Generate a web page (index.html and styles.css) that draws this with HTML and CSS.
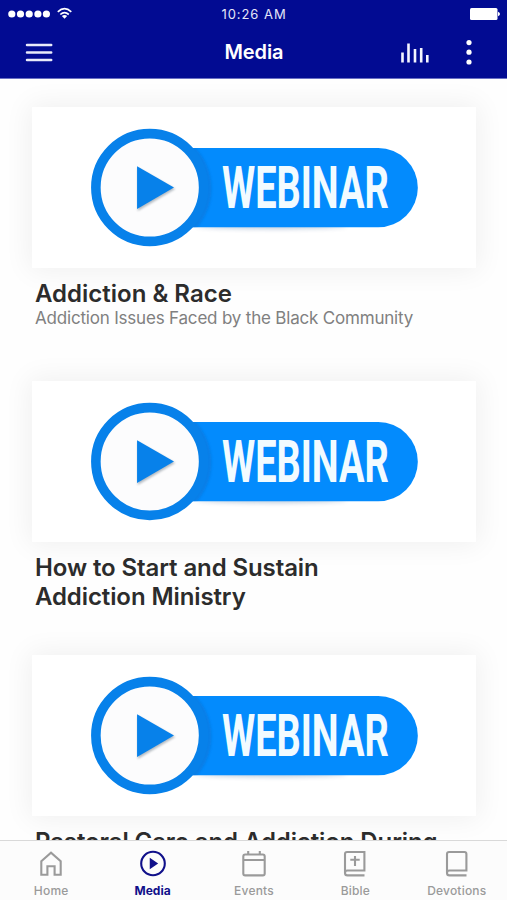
FILE: index.html
```html
<!DOCTYPE html>
<html lang="en">
<head>
<meta charset="utf-8">
<title>Media</title>
<link rel="stylesheet" href="styles.css">
</head>
<body>
<svg class="defs" width="0" height="0" aria-hidden="true">
  <defs>
    <filter id="soft" x="-20%" y="-20%" width="140%" height="140%"><feGaussianBlur stdDeviation="1.2"/></filter>
    <filter id="softer" x="-20%" y="-200%" width="140%" height="500%"><feGaussianBlur stdDeviation="2.5"/></filter>
    <clipPath id="pill"><path d="M118 41H347A39.7 39.7 0 0 1 347 120.400H118Z"/></clipPath>
  </defs>
</svg>
<header class="header">
  <div class="status">
    <svg class="signal" width="66" height="14" viewBox="0 0 66 14" fill="#fff">
      <circle cx="3.800" cy="7" r="3.600"/><circle cx="12.500" cy="7" r="3.600"/><circle cx="21.200" cy="7" r="3.600"/><circle cx="29.900" cy="7" r="3.600"/><circle cx="38.400" cy="7" r="3.600"/>
      <g fill="none" stroke="#fff" stroke-width="1.700"><path d="M49.800 4.800Q56.500-1.400 63.300 4.800M52.300 7.500Q56.500 3.600 60.800 7.500"/></g>
      <path d="M53.900 9Q56.500 6.900 59.200 9L56.500 11.800Z"/>
    </svg>
    <span class="time">10:26 AM</span>
    <svg class="battery" width="30" height="12" viewBox="0 0 30 12" fill="#fff"><rect width="27.500" height="12" rx="1.500"/><path d="M28 3.800Q30 4.500 30 6T28 8.200Z"/></svg>
  </div>
  <div class="nav">
    <svg class="menu" width="28" height="20" viewBox="0 0 28 20"><path d="M2 2.100H26.200M2 9.500H26.200M2 17H26.200" stroke="#e9eafa" stroke-width="2.500" stroke-linecap="round"/></svg>
    <h1>Media</h1>
    <div class="actions">
      <svg width="28" height="22" viewBox="0 0 28 22"><path d="M1.500 10.500V20.500M7.500 1.500V20.500M14 7V20.500M20.200 6V20.500M26.300 13V20.500" stroke="#f4f5ff" stroke-width="2.600"/></svg>
      <svg width="6" height="26" viewBox="0 0 6 26" fill="#fff"><circle cx="3" cy="2.600" r="2.600"/><circle cx="3" cy="12.200" r="2.600"/><circle cx="3" cy="22" r="2.600"/></svg>
    </div>
  </div>
</header>
<main class="list">
  <article class="item">
    <svg class="thumb" viewBox="0 0 445 161">
      <g id="banner">
        <ellipse cx="240" cy="119" rx="75" ry="2.500" fill="#003a7a" opacity=".3" filter="url(#softer)"/>
        <path d="M118 41H347A39.700 39.700 0 0 1 347 120.400H118Z" fill="#038bfd"/>
        <g clip-path="url(#pill)"><circle cx="121" cy="81.500" r="59" fill="#0878dc" opacity=".65" filter="url(#soft)"/></g>
        <circle cx="118" cy="80.500" r="54" fill="#fcfcfd" stroke="#0781ea" stroke-width="9.600"/>
        <path d="M106 61L143.500 82L106 104Z" fill="#345" opacity=".35" filter="url(#soft)"/>
        <path d="M105.300 59.300L142.300 80.500L105.300 102Z" fill="#0781ea"/>
        <text class="word" x="190.500" y="101.500" textLength="167" lengthAdjust="spacingAndGlyphs">WEBINAR</text>
      </g>
    </svg>
    <h2>Addiction &amp; Race</h2>
    <p>Addiction Issues Faced by the Black Community</p>
  </article>
  <article class="item">
    <svg class="thumb" viewBox="0 0 445 161"><use href="#banner"/></svg>
    <h2>How to Start and Sustain<br>Addiction Ministry</h2>
  </article>
  <article class="item">
    <svg class="thumb" viewBox="0 0 445 161"><use href="#banner"/></svg>
    <h2>Pastoral Care and Addiction During</h2>
  </article>
</main>
<nav class="tabs">
  <a class="tab">
    <svg viewBox="0 0 28 28"><path d="M4.300 11.200L14 2.600L23.700 11.200V24.700H17.600V16.200H10.400V24.700H4.300Z"/></svg>
    <span>Home</span>
  </a>
  <a class="tab active">
    <svg viewBox="0 0 28 28"><circle cx="14" cy="13.500" r="11.800"/><path d="M11.800 9.800V17.200L17.300 13.500Z" fill="currentColor"/></svg>
    <span>Media</span>
  </a>
  <a class="tab">
    <svg viewBox="0 0 28 28"><path d="M5.200 4.500H22.800Q24.700 4.500 24.700 6.400V23.500Q24.700 25.400 22.800 25.400H5.200Q3.300 25.400 3.300 23.500V6.400Q3.300 4.500 5.200 4.500ZM3.300 10H24.700M8.200 1V4.500M19.800 1V4.500"/></svg>
    <span>Events</span>
  </a>
  <a class="tab">
    <svg viewBox="0 0 28 28"><path d="M23.500 25.400H6.500Q4 25.400 4 22.900V4Q4 2 6 2H23.400V20.500H6.500Q4 20.500 4 22.900M14 6V16M9.300 9.700H18.700"/></svg>
    <span>Bible</span>
  </a>
  <a class="tab">
    <svg viewBox="0 0 28 28"><path d="M23.500 25.400H6.500Q4 25.400 4 22.900V4Q4 2 6 2H21.400Q23.400 2 23.400 4V20.500H6.500Q4 20.500 4 22.900"/></svg>
    <span>Devotions</span>
  </a>
</nav>
</body>
</html>
```
FILE: styles.css
```css
* { box-sizing: border-box; margin: 0; }
body {
  display: flex;
  flex-direction: column;
  height: 900px;
  overflow: hidden;
  background: #fefefe;
  font-family: Inter, "Liberation Sans", sans-serif;
}
.defs { position: absolute; }
.header {
  flex: none;
  height: 79px;
  background: #020b92;
  border-bottom: 1px solid #6a70c4;
  color: #fff;
}
.status, .nav {
  display: grid;
  grid-template-columns: 1fr auto 1fr;
  align-items: center;
}
.status { height: 27px; padding: 0 7px 0 8px; }
.time { font-size: 13px; letter-spacing: .95px; color: #e4e6f8; }
.battery { justify-self: end; }
.nav { height: 51px; padding: 0 35px 0 25px; }
.nav h1 { font-size: 20px; font-weight: 600; letter-spacing: -.1px; transform: translate(5.500px, -1px); }
.actions { display: flex; align-items: center; justify-content: flex-end; gap: 37px; }
.list { flex: 1; min-height: 0; overflow: hidden; padding: 28px 31px 0 32px; }
.item { height: 274px; }
.thumb {
  display: block;
  width: 444px;
  height: 161px;
  background: #fff;
  box-shadow: 0 0 26px 3px rgba(0, 0, 0, .06);
}
.word { font: 700 59px Roboto, sans-serif; fill: #f2fbff; }
.item h2 {
  padding: 11px 0 0 3px;
  font-size: 24px;
  line-height: 29px;
  font-weight: 600;
  letter-spacing: -.1px;
  color: #2c2c2c;
  white-space: nowrap;
}
.item:first-child h2 { letter-spacing: 0; }
.item p { padding-left: 3px; font-size: 17px; line-height: 20px; letter-spacing: -.19px; color: #808080; white-space: nowrap; }
.tabs {
  flex: none;
  display: grid;
  grid-template-columns: repeat(5, 1fr);
  height: 60px;
  background: #fcfcfc;
  border-top: 1px solid #d9d9d9;
}
.tab { display: flex; flex-direction: column; align-items: center; padding: 9px 0 0 1px; color: #9a9a9a; }
.tab svg { width: 28px; height: 28px; fill: none; stroke: currentColor; stroke-width: 2.1; }
.tab span { margin-top: 5px; font-size: 12px; line-height: 16px; font-weight: 500; letter-spacing: .2px; }
.active { color: #10108a; }
.active span { font-weight: 700; letter-spacing: 0; }
```
